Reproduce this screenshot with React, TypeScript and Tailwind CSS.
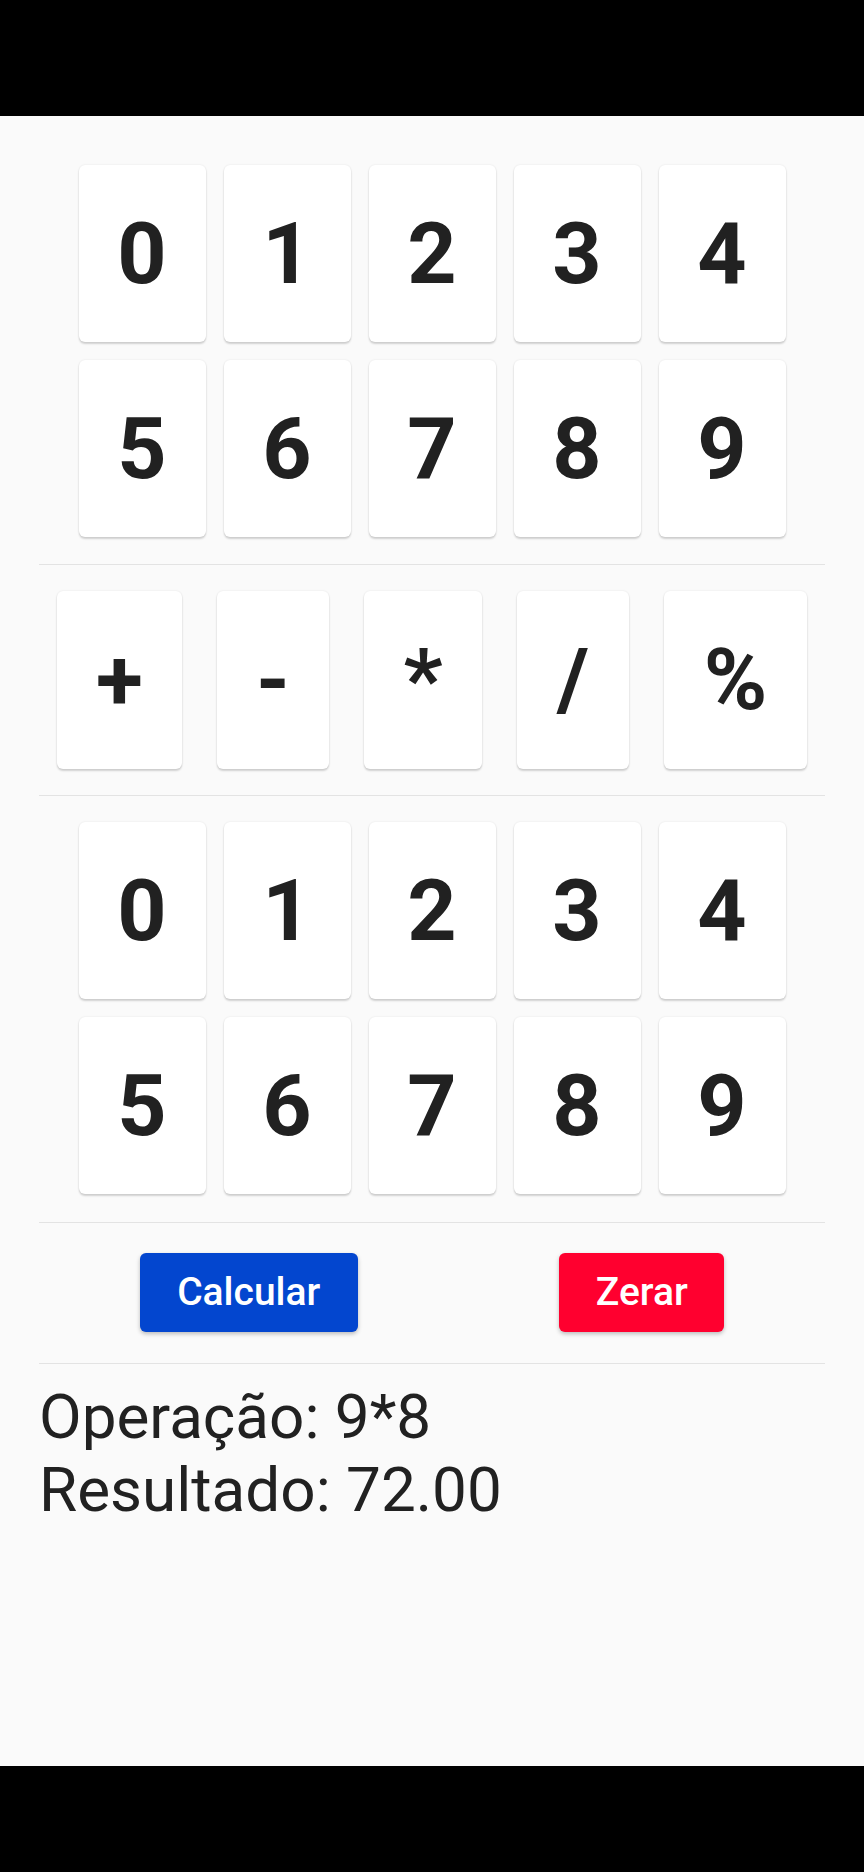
import React from "react";

const digitsA = ["0", "1", "2", "3", "4"];
const digitsB = ["5", "6", "7", "8", "9"];

const ops: { label: string; w: string }[] = [
  { label: "+", w: "w-[125px]" },
  { label: "-", w: "w-[112px]" },
  { label: "*", w: "w-[118px]" },
  { label: "/", w: "w-[112px]" },
  { label: "%", w: "w-[143px]" },
];

const keyCls =
  "bg-white rounded-[6px] flex items-center justify-center text-[#212121] font-bold text-[86px] leading-none shadow-[0_2px_2px_rgba(0,0,0,0.16),0_0_2px_rgba(0,0,0,0.10)]";

function DigitRow({ items }: { items: string[] }) {
  return (
    <div className="flex justify-center gap-[18px]">
      {items.map((d) => (
        <div key={d} className={`${keyCls} w-[127px] h-[177px]`}>
          {d}
        </div>
      ))}
    </div>
  );
}

function Divider({ className }: { className: string }) {
  return <div className={`h-px bg-[#e3e3e3] ${className}`} />;
}

export default function App() {
  return (
    <div className="w-[864px] h-[1872px] flex flex-col bg-black font-['Roboto',sans-serif]">
      <div className="h-[116px] bg-black shrink-0" />
      <div className="h-[1650px] shrink-0 bg-[#fafafa] px-[39px] pt-[49px] flex flex-col">
        <div className="flex flex-col gap-[18px]">
          <DigitRow items={digitsA} />
          <DigitRow items={digitsB} />
        </div>
        <Divider className="mt-[27px]" />
        <div className="mt-[26px] flex justify-center gap-[35px]">
          {ops.map((o) => (
            <div key={o.label} className={`${keyCls} ${o.w} h-[178px]`}>
              {o.label}
            </div>
          ))}
        </div>
        <Divider className="mt-[26px]" />
        <div className="mt-[26px] flex flex-col gap-[18px]">
          <DigitRow items={digitsA} />
          <DigitRow items={digitsB} />
        </div>
        <Divider className="mt-[28px]" />
        <div className="mt-[30px] flex justify-around">
          <div className="w-[218px] h-[79px] rounded-[6px] bg-[#0346cf] text-white font-medium text-[39px] leading-none flex items-center justify-center shadow-[0_2px_4px_rgba(0,0,0,0.25)]">
            Calcular
          </div>
          <div className="w-[165px] h-[79px] rounded-[6px] bg-[#ff002f] text-white font-medium text-[39px] leading-none flex items-center justify-center shadow-[0_2px_4px_rgba(0,0,0,0.25)]">
            Zerar
          </div>
        </div>
        <Divider className="mt-[31px]" />
        <div className="mt-[16px] text-[62px] leading-[73px] text-[#212121]">
          <div>Operação: 9*8</div>
          <div>Resultado: 72.00</div>
        </div>
      </div>
      <div className="flex-1 bg-black" />
    </div>
  );
}
